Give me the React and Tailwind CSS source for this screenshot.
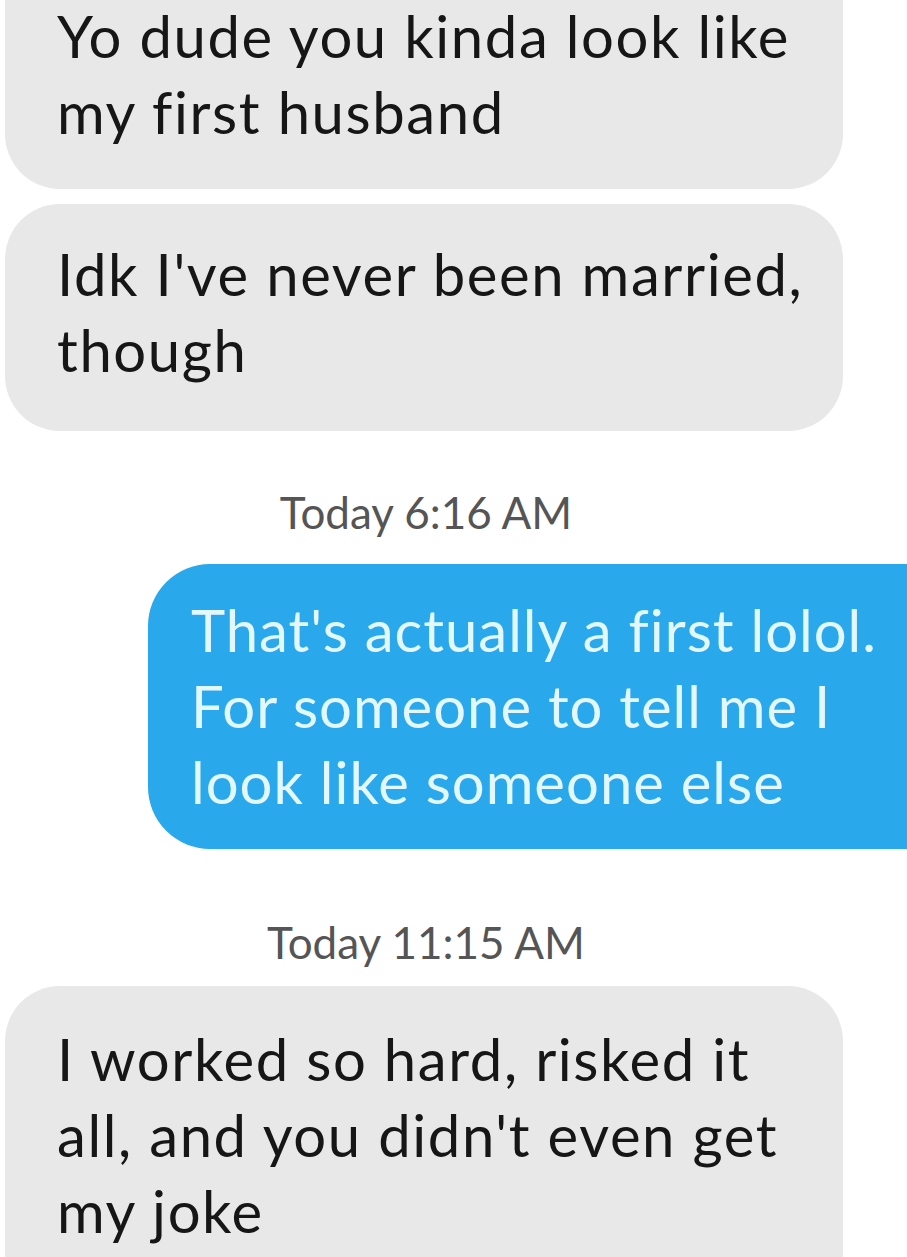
export default function App() {
  const font = { fontFamily: "Lato, 'Open Sans', sans-serif" };
  return (
    <div className="w-[907px] h-[1257px] overflow-hidden bg-white [font-variant-ligatures:none]" style={font}>
      <div className="flex flex-col">
        <div className="ml-[5px] w-[838px] bg-[#e8e8e8] rounded-b-[55px] pl-[52px] pr-6 pt-0 pb-[39px] -mt-[2px] text-[58px] leading-[76px] tracking-[1.6px] text-[#161616]">
          <div>Yo dude you kinda look like</div>
          <div>my first husband</div>
        </div>
        <div className="ml-[5px] mt-[15px] w-[838px] bg-[#e8e8e8] rounded-[55px] pl-[52px] pr-6 pt-[32px] pb-[43px] text-[58px] leading-[76px] tracking-[1.6px] text-[#161616]">
          <div>Idk I've never been married,</div>
          <div>though</div>
        </div>
        <div className="ml-[5px] w-[842px] mt-[56px] text-center text-[44px] leading-[50px] text-[#555555]">
          Today 6:16 AM
        </div>
        <div className="ml-[148px] mt-[27px] bg-[#29a8ec] rounded-l-[62px] pl-[43px] pt-[28px] pb-[29px] text-[58px] leading-[76px] tracking-[1px] text-[#e2f7ff]">
          <div>That's actually a first lolol.</div>
          <div>For someone to tell me I</div>
          <div>look like someone else</div>
        </div>
        <div className="ml-[5px] w-[842px] mt-[68px] text-center text-[44px] leading-[50px] text-[#555555]">
          Today 11:15 AM
        </div>
        <div className="ml-[5px] mt-[19px] w-[838px] bg-[#e8e8e8] rounded-[55px] pl-[52px] pr-6 pt-[35px] pb-[60px] text-[58px] leading-[76px] tracking-[1.6px] text-[#161616]">
          <div>I worked so hard, risked it</div>
          <div>all, and you didn't even get</div>
          <div>my joke</div>
        </div>
      </div>
    </div>
  );
}
